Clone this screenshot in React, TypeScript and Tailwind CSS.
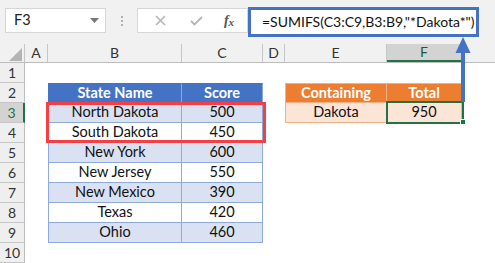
import React from "react";

const colW = [25, 23, 134, 81, 22, 102, 75];
const letters = ["", "A", "B", "C", "D", "E", "F"];

type Cell = { text?: string; cls?: string };

const blueHead = "bg-[#4472c4] text-white font-bold border-t border-t-[#4472c4] border-r border-b border-[#8ea9db]";
const blueL = "bg-[#d9e1f2] border-r border-b border-[#8ea9db] text-[#111]";
const blueW = "bg-white border-r border-b border-[#8ea9db] text-[#111]";
const orHead = "bg-[#ed7d31] text-white font-bold border-t border-t-[#f4b084] border-r border-b border-[#f4b084]";
const orCell = "bg-[#fce4d6] border-r border-b border-[#f4b084] text-[#111]";

const states: [string, string][] = [
  ["North Dakota", "500"],
  ["South Dakota", "450"],
  ["New York", "600"],
  ["New Jersey", "550"],
  ["New Mexico", "390"],
  ["Texas", "420"],
  ["Ohio", "460"],
];

function rowCells(r: number): Record<number, Cell> {
  const m: Record<number, Cell> = {};
  if (r === 2) {
    m[2] = { text: "State Name", cls: blueHead + " border-l border-l-[#4472c4]" };
    m[3] = { text: "Score", cls: blueHead };
    m[5] = { text: "Containing", cls: orHead + " border-l border-l-[#f4b084]" };
    m[6] = { text: "Total", cls: orHead };
  }
  if (r >= 3 && r <= 9) {
    const [s, v] = states[r - 3];
    const c = r % 2 === 1 ? blueL : blueW;
    m[2] = { text: s, cls: c + " border-l border-l-[#8ea9db]" };
    m[3] = { text: v, cls: c };
  }
  if (r === 3) {
    m[5] = { text: "Dakota", cls: orCell + " border-l border-l-[#f4b084]" };
    m[6] = { text: "950", cls: orCell };
  }
  return m;
}

export default function App() {
  return (
    <div
      className="relative w-[495px] h-[263px] overflow-hidden bg-[#f1f1f1] text-[14px] leading-none"
      style={{ fontFamily: "Lato, 'Open Sans', sans-serif" }}
    >
      {/* formula bar */}
      <div className="h-[44px] flex items-start pt-[8px] pl-[5px]">
        <div className="w-[101px] h-[25px] bg-white border border-[#d6d6d6] flex items-center justify-between pl-[8px] pr-[6px] text-[#222]">
          <span className="text-[14.5px]">F3</span>
          <svg width="9" height="5" viewBox="0 0 9 5"><path d="M0 0h9L4.5 5z" fill="#777" /></svg>
        </div>
        <div className="w-[31px] h-[25px] flex flex-col items-center justify-center gap-[2px]">
          <div className="w-[2px] h-[2px] bg-[#b0b0b0]" />
          <div className="w-[2px] h-[2px] bg-[#b0b0b0]" />
          <div className="w-[2px] h-[2px] bg-[#b0b0b0]" />
        </div>
        <div className="w-[111px] h-[25px] bg-white border border-[#d6d6d6] flex items-center">
          <div className="w-[36px] flex justify-center ml-[4px]">
            <svg width="11" height="11" viewBox="0 0 11 11"><path d="M1 1L10 10M10 1L1 10" stroke="#b5b5b5" strokeWidth="1.6" /></svg>
          </div>
          <div className="w-[36px] flex justify-center">
            <svg width="13" height="10" viewBox="0 0 13 10"><path d="M1 5L4.5 8.5L12 1" stroke="#b5b5b5" strokeWidth="1.8" fill="none" /></svg>
          </div>
          <div className="w-[30px] flex justify-center italic text-[#555] text-[14px]" style={{ fontFamily: "'Liberation Serif', serif" }}>
            <span className="font-bold">f</span><span className="text-[11px] mt-[3px] font-bold">x</span>
          </div>
        </div>
        <div className="w-[231px] h-[30px] -mt-[1px] bg-white border-[3px] border-[#4472c4] flex items-center pl-[11px] text-[14px] text-[#111]">
          =SUMIFS(C3:C9,B3:B9,"*Dakota*")
        </div>
      </div>

      {/* column headers */}
      <div className="h-[19px] flex border-b border-[#bdbdbd]">
        {colW.map((w, i) => (
          <div
            key={i}
            style={{ width: w }}
            className={
              "shrink-0 h-full flex items-center justify-center border-r border-[#c6c6c6] text-[14px] " +
              (i === 6 ? "bg-[#d3d3d3] text-[#1e5c38] border-b-2 border-b-[#217346]" : "text-[#333]")
            }
          >
            {i === 0 ? (
              <svg width="13" height="13" viewBox="0 0 13 13" className="ml-[6px] mt-[3px]"><path d="M13 0V13H0z" fill="#b4b4b4" /></svg>
            ) : (
              letters[i]
            )}
          </div>
        ))}
        <div className="flex-1" />
      </div>

      {/* rows */}
      {Array.from({ length: 10 }, (_, k) => k + 1).map((r) => {
        const cells = rowCells(r);
        return (
          <div key={r} className="h-[20px] flex">
            <div
              className={
                "w-[25px] shrink-0 h-full flex items-center justify-center border-b border-[#c6c6c6] text-[14px] " +
                (r === 3 ? "bg-[#d3d3d3] text-[#217346] border-r-2 border-r-[#217346]" : "bg-[#efefef] text-[#333] border-r border-r-[#bdbdbd]")
              }
            >
              {r}
            </div>
            {colW.slice(1).map((w, j) => {
              const c = cells[j + 1];
              return (
                <div
                  key={j}
                  style={{ width: w }}
                  className={"shrink-0 h-full flex items-center justify-center text-[14.5px] " + (c ? c.cls : "bg-white")}
                >
                  {c?.text}
                </div>
              );
            })}
            <div className="flex-1 bg-white" />
          </div>
        );
      })}

      {/* red highlight */}
      <div className="absolute left-[46px] top-[102px] w-[220px] h-[41px] border-[3px] border-[#f43f45]" />

      {/* selected cell */}
      <div className="absolute left-[386px] top-[101px] w-[78px] h-[23px] border-2 border-[#217346]" />
      <div className="absolute left-[460px] top-[119px] w-[6px] h-[6px] bg-[#217346] border border-white" />

      {/* arrow */}
      <svg className="absolute left-[450px] top-[34px]" width="26" height="70" viewBox="0 0 26 70">
        <rect x="11" y="16" width="4" height="52" fill="#4472c4" />
        <path d="M13 3L5.5 19H20.5z" fill="#4472c4" />
      </svg>
    </div>
  );
}
